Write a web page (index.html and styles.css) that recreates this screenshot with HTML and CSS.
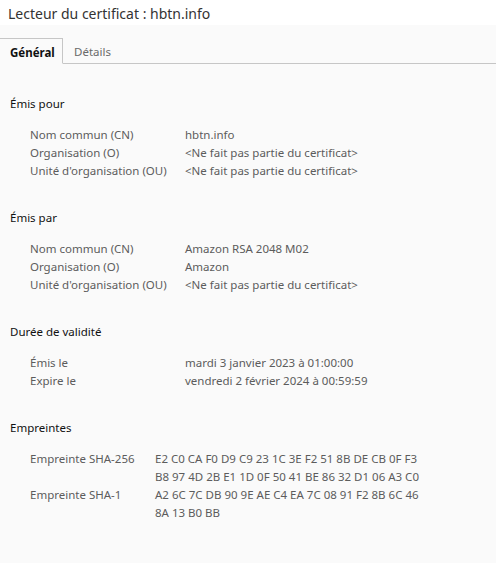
FILE: index.html
```html
<!DOCTYPE html>
<html lang="fr">
<head>
<meta charset="utf-8">
<title>Lecteur du certificat</title>
<link rel="stylesheet" href="styles.css">
</head>
<body>
<div class="dialog">
  <div class="titlebar">Lecteur du certificat : hbtn.info</div>
  <div class="tabs">
    <div class="tab active">Général</div>
    <div class="tab">Détails</div>
    <div class="tab-rest"></div>
  </div>
  <div class="content">
    <section class="section">
      <div class="heading">Émis pour</div>
      <div class="grid">
        <div class="label">Nom commun (CN)</div><div class="value">hbtn.info</div>
        <div class="label">Organisation (O)</div><div class="value">&lt;Ne fait pas partie du certificat&gt;</div>
        <div class="label">Unité d'organisation (OU)</div><div class="value">&lt;Ne fait pas partie du certificat&gt;</div>
      </div>
    </section>
    <section class="section">
      <div class="heading">Émis par</div>
      <div class="grid">
        <div class="label">Nom commun (CN)</div><div class="value">Amazon RSA 2048 M02</div>
        <div class="label">Organisation (O)</div><div class="value">Amazon</div>
        <div class="label">Unité d'organisation (OU)</div><div class="value">&lt;Ne fait pas partie du certificat&gt;</div>
      </div>
    </section>
    <section class="section">
      <div class="heading">Durée de validité</div>
      <div class="grid">
        <div class="label">Émis le</div><div class="value">mardi 3 janvier 2023 à 01:00:00</div>
        <div class="label">Expire le</div><div class="value">vendredi 2 février 2024 à 00:59:59</div>
      </div>
    </section>
    <section class="section">
      <div class="heading">Empreintes</div>
      <div class="grid narrow">
        <div class="label">Empreinte SHA-256</div>
        <div class="value"><span class="line">E2 C0 CA F0 D9 C9 23 1C 3E F2 51 8B DE CB 0F F3</span><span class="line">B8 97 4D 2B E1 1D 0F 50 41 BE 86 32 D1 06 A3 C0</span></div>
        <div class="label">Empreinte SHA-1</div>
        <div class="value"><span class="line">A2 6C 7C DB 90 9E AE C4 EA 7C 08 91 F2 8B 6C 46</span><span class="line">8A 13 B0 BB</span></div>
      </div>
    </section>
  </div>
</div>
</body>
</html>
```

FILE: styles.css
```css
html, body {
  margin: 0;
  padding: 0;
  background: #fafafa;
}
body {
  font-family: "Noto Sans", "Open Sans", sans-serif;
  font-size: 11.5px;
  color: #5c5c5c;
}
.dialog {
  width: 496px;
  height: 563px;
  display: flex;
  flex-direction: column;
  background: #fafafa;
}
.titlebar {
  height: 25px;
  box-sizing: border-box;
  padding: 3px 0 0 8px;
  background: #ffffff;
  color: #333333;
  font-size: 14px;
  line-height: 22px;
  white-space: nowrap;
}
.tabs {
  display: flex;
  align-items: flex-end;
  height: 39px;
  background: #fafafa;
}
.tab {
  height: 26px;
  box-sizing: border-box;
  line-height: 23px;
  padding: 2px 10px 0 11px;
  color: #6a6a6a;
  border-bottom: 1px solid #c6c6c6;
}
.tab.active {
  font-weight: 700;
  color: #111111;
  padding: 2px 0 0 10px;
  width: 63px;
  border-top: 1px solid #c6c6c6;
  border-right: 1px solid #c6c6c6;
  border-bottom: 1px solid transparent;
  background: #fafafa;
}
.tab-rest {
  flex: 1;
  height: 26px;
  border-bottom: 1px solid #c6c6c6;
  box-sizing: border-box;
}
.content {
  padding: 31px 10px 0 10px;
  display: flex;
  flex-direction: column;
  gap: 29px;
}
.heading {
  color: #111111;
  line-height: 18px;
  margin-bottom: 13px;
}
.grid {
  display: grid;
  grid-template-columns: 155px 1fr;
  padding-left: 20px;
  line-height: 18px;
}
.grid.narrow {
  grid-template-columns: 125px 1fr;
}
.label, .value {
  white-space: nowrap;
}
.line {
  display: block;
}
```
